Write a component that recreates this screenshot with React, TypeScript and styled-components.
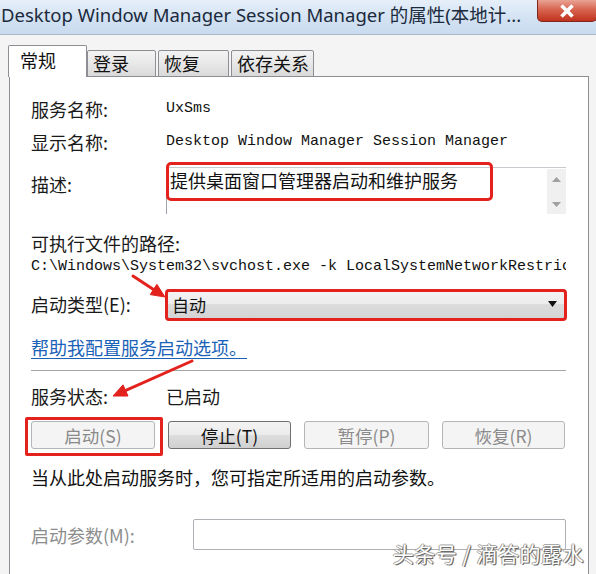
import { createGlobalStyle, styled } from "styled-components";

const GlobalStyle = createGlobalStyle`
  html, body {
    margin: 0;
    padding: 0;
    background: #f5f5f5;
  }
  body {
    font-family: "Noto Sans CJK SC", "Noto Sans", sans-serif;
  }
`;

const CJK = `"Noto Sans CJK SC", "Noto Sans", sans-serif`;
const MONO = `"Liberation Mono", "Noto Sans CJK SC", monospace`;

const Window = styled.div`
  position: relative;
  width: 596px;
  height: 574px;
  overflow: hidden;
  background: #f4f4f4;
  display: flex;
  flex-direction: column;
`;

const TitleBar = styled.div`
  height: 35px;
  flex: none;
  display: flex;
  align-items: flex-start;
  justify-content: space-between;
  background: linear-gradient(180deg, #e6eff9 0%, #d3e2f3 55%, #c9dbef 100%);
  border-bottom: 1px solid #a9b8ca;
  box-sizing: border-box;
`;

const Title = styled.div`
  padding: 2px 0 0 1px;
  font-family: "Noto Sans", ${CJK};
  font-size: 18.5px;
  line-height: 26px;
  color: #1b2a3c;
  white-space: nowrap;
`;

const CloseButton = styled.div`
  width: 60px;
  height: 22px;
  margin-right: -1px;
  display: flex;
  align-items: center;
  justify-content: center;
  background: linear-gradient(180deg, #e9a394 0%, #d7654f 45%, #c0321e 100%);
  border: 1px solid #80271b;
  border-top: none;
  border-radius: 0 0 5px 5px;
  box-sizing: border-box;
`;

const Body = styled.div`
  flex: 1;
  display: flex;
  flex-direction: column;
  padding: 10px 7px 0 8px;
`;

const TabStrip = styled.div`
  display: flex;
  align-items: flex-end;
  height: 32px;
  position: relative;
  z-index: 1;
  margin-bottom: -1px;
`;

const Tab = styled.div<{ $active?: boolean; $w: number }>`
  width: ${(p) => p.$w}px;
  height: ${(p) => (p.$active ? 32 : 27)}px;
  margin-right: ${(p) => (p.$active ? 0 : 2)}px;
  box-sizing: border-box;
  border: 1px solid #8c8e94;
  border-bottom: ${(p) => (p.$active ? "none" : "1px solid #8c8e94")};
  border-radius: 2px 2px 0 0;
  background: ${(p) =>
    p.$active ? "#ffffff" : "linear-gradient(180deg, #f3f3f3 0%, #e8e8e8 50%, #d9d9d9 100%)"};
  font-family: ${CJK};
  font-size: 18px;
  line-height: ${(p) => (p.$active ? 28 : 25)}px;
  padding-left: ${(p) => (p.$active ? 11 : 5)}px;
  color: #111;
`;

const Panel = styled.div`
  flex: 1;
  margin-left: 1px;
  width: 580px;
  background: #ffffff;
  border: 1px solid #8c8e94;
  border-bottom: none;
  box-sizing: border-box;
  padding: 20px 22px 0 21px;
  display: flex;
  flex-direction: column;
`;

const Row = styled.div<{ $mt?: number; $h?: number; $top?: boolean }>`
  display: flex;
  align-items: ${(p) => (p.$top ? "flex-start" : "center")};
  margin-top: ${(p) => p.$mt ?? 0}px;
  height: ${(p) => p.$h ?? 24}px;
`;

const Label = styled.div<{ $w?: number; $muted?: boolean; $pt?: number }>`
  width: ${(p) => (p.$w ? `${p.$w}px` : "auto")};
  flex: none;
  font-family: ${CJK};
  font-size: 18px;
  line-height: 24px;
  padding-top: ${(p) => p.$pt ?? 0}px;
  color: ${(p) => (p.$muted ? "#8d8d8d" : "#1a1a1a")};
  white-space: nowrap;
`;

const Mono = styled.div`
  min-width: 0;
  font-family: ${MONO};
  font-size: 15px;
  line-height: 22px;
  color: #111;
  white-space: nowrap;
  overflow: hidden;
  text-overflow: clip;
`;

const DescBox = styled.div`
  position: relative;
  flex: 1;
  height: 47px;
  box-sizing: border-box;
  border-top: 1px solid #c8cacf;
  border-left: 1px solid #9ea2aa;
  display: flex;
`;

const DescText = styled.div`
  flex: 1;
  padding: 0 0 0 3px;
  font-family: ${CJK};
  font-size: 18px;
  line-height: 24px;
  color: #111;
  white-space: nowrap;
`;

const ScrollBar = styled.div`
  width: 19px;
  margin-top: 1px;
  background: #f0f0f0;
  display: flex;
  flex-direction: column;
  justify-content: space-between;
  align-items: center;
  padding: 8px 0 7px;
  box-sizing: border-box;
`;

const Highlight = styled.div<{ $l: number; $t: number; $w: number; $h: number; $r?: number }>`
  position: absolute;
  left: ${(p) => p.$l}px;
  top: ${(p) => p.$t}px;
  width: ${(p) => p.$w}px;
  height: ${(p) => p.$h}px;
  border: 3px solid #e3211d;
  border-radius: ${(p) => p.$r ?? 4}px;
  box-sizing: border-box;
  pointer-events: none;
`;

const Combo = styled.div`
  position: relative;
  flex: 1;
  height: 30px;
  box-sizing: border-box;
  border: 1px solid #8e8f8f;
  border-radius: 3px;
  background: linear-gradient(180deg, #f4f4f4 0%, #ececec 50%, #dcdcdc 52%, #d4d4d4 100%);
  display: flex;
  align-items: center;
  justify-content: space-between;
  padding: 0 8px 0 5px;
  font-family: ${CJK};
  font-size: 17px;
  color: #111;
`;

const Link = styled.a`
  font-family: ${CJK};
  font-size: 18px;
  line-height: 24px;
  color: #1a62b7;
  text-decoration: underline;
  text-underline-offset: 3px;
  white-space: nowrap;
`;

const Separator = styled.div`
  margin-top: 11px;
  height: 1px;
  background: #a6a6a6;
  border-bottom: 1px solid #ffffff;
`;

const ButtonRow = styled.div`
  display: flex;
  gap: 13px;
  margin-top: 13px;
  height: 28px;
  position: relative;
`;

const Button = styled.div<{ $disabled?: boolean; $w: number }>`
  width: ${(p) => p.$w}px;
  height: 28px;
  box-sizing: border-box;
  border: 1px solid ${(p) => (p.$disabled ? "#b3b6b8" : "#707070")};
  border-radius: 3px;
  background: ${(p) =>
    p.$disabled
      ? "#f4f4f4"
      : "linear-gradient(180deg, #f3f3f3 0%, #ebebeb 50%, #dddddd 52%, #d0d0d0 100%)"};
  display: flex;
  align-items: center;
  justify-content: center;
  font-family: ${CJK};
  font-size: 17.5px;
  color: ${(p) => (p.$disabled ? "#8a8a8a" : "#111")};
  white-space: nowrap;
`;

const Hint = styled.div`
  margin-top: 16px;
  font-family: ${CJK};
  font-size: 18px;
  line-height: 24px;
  color: #111;
  white-space: nowrap;
`;

const ParamInput = styled.div`
  flex: 1;
  height: 31px;
  box-sizing: border-box;
  border: 1px solid #adb0b5;
  border-radius: 2px;
  background: #ffffff;
`;

const Overlay = styled.svg`
  position: absolute;
  left: 0;
  top: 0;
  pointer-events: none;
`;

const Watermark = styled.div`
  position: absolute;
  right: 12px;
  bottom: 8px;
  font-family: ${CJK};
  font-size: 21px;
  line-height: 26px;
  color: #ffffff;
  letter-spacing: 0.5px;
  text-shadow: 1px 1px 0 #6a6a6a, -1px 0 0 #9a9a9a, 0 -1px 0 #aaaaaa, 1px 0 1px #555;
  white-space: nowrap;
`;

const Arrow = ({ x1, y1, x2, y2 }: { x1: number; y1: number; x2: number; y2: number }) => {
  const a = Math.atan2(y2 - y1, x2 - x1);
  const len = 15;
  const spread = 0.42;
  const p1 = [x2 - len * Math.cos(a - spread), y2 - len * Math.sin(a - spread)];
  const p2 = [x2 - len * Math.cos(a + spread), y2 - len * Math.sin(a + spread)];
  const bx = x2 - 11 * Math.cos(a);
  const by = y2 - 11 * Math.sin(a);
  return (
    <g fill="#e3211d" stroke="#e3211d">
      <line x1={x1} y1={y1} x2={bx} y2={by} strokeWidth={3} strokeLinecap="round" />
      <polygon points={`${x2},${y2} ${p1[0]},${p1[1]} ${p2[0]},${p2[1]}`} strokeWidth={1} />
    </g>
  );
};

export default function App() {
  return (
    <>
      <GlobalStyle />
      <Window>
        <TitleBar>
          <Title>Desktop Window Manager Session Manager 的属性(本地计...</Title>
          <CloseButton>
            <svg width="18" height="14" viewBox="0 0 18 14">
              <path d="M3.5 1.5 L14.5 12.5 M14.5 1.5 L3.5 12.5" stroke="#ffffff" strokeWidth="3.6" />
            </svg>
          </CloseButton>
        </TitleBar>

        <Body>
          <TabStrip>
            <Tab $active $w={79}>常规</Tab>
            <Tab $w={69}>登录</Tab>
            <Tab $w={71}>恢复</Tab>
            <Tab $w={83}>依存关系</Tab>
          </TabStrip>

          <Panel>
            <Row>
              <Label $w={135}>服务名称:</Label>
              <Mono>UxSms</Mono>
            </Row>
            <Row $mt={9}>
              <Label $w={135}>显示名称:</Label>
              <Mono>Desktop Window Manager Session Manager</Mono>
            </Row>
            <Row $mt={13} $h={47} $top>
              <Label $w={135} $pt={5}>描述:</Label>
              <DescBox>
                <DescText>提供桌面窗口管理器启动和维护服务</DescText>
                <ScrollBar>
                  <svg width="9" height="5" viewBox="0 0 9 5">
                    <path d="M0 5 L4.5 0 L9 5 Z" fill="#a0a0a0" />
                  </svg>
                  <svg width="9" height="5" viewBox="0 0 9 5">
                    <path d="M0 0 L4.5 5 L9 0 Z" fill="#a0a0a0" />
                  </svg>
                </ScrollBar>
              </DescBox>
            </Row>
            <Row $mt={17}>
              <Label>可执行文件的路径:</Label>
            </Row>
            <Row $h={22} $mt={1}>
              <Mono>C:\Windows\System32\svchost.exe -k LocalSystemNetworkRestricted</Mono>
            </Row>
            <Row $mt={11} $h={30}>
              <Label $w={135}>启动类型(E):</Label>
              <Combo>
                <span>自动</span>
                <svg width="9" height="6" viewBox="0 0 9 6">
                  <path d="M0 0 L9 0 L4.5 6 Z" fill="#111" />
                </svg>
              </Combo>
            </Row>
            <Row $mt={16}>
              <Link>帮助我配置服务启动选项。</Link>
            </Row>
            <Separator />
            <Row $mt={12}>
              <Label $w={135}>服务状态:</Label>
              <Label>已启动</Label>
            </Row>
            <ButtonRow>
              <Button $disabled $w={124}>启动(S)</Button>
              <Button $w={123}>停止(T)</Button>
              <Button $disabled $w={125}>暂停(P)</Button>
              <Button $disabled $w={123}>恢复(R)</Button>
            </ButtonRow>
            <Hint>当从此处启动服务时，您可指定所适用的启动参数。</Hint>
            <Row $mt={30} $h={31}>
              <Label $w={162} $muted>启动参数(M):</Label>
              <ParamInput />
            </Row>
          </Panel>
        </Body>

        <Highlight $l={166} $t={162} $w={327} $h={39} $r={5} />
        <Highlight $l={165} $t={289} $w={402} $h={32} $r={4} />
        <Highlight $l={25} $t={417} $w={138} $h={39} $r={2} />

        <Overlay width="596" height="574">
          <Arrow x1={133} y1={276} x2={165} y2={297} />
          <Arrow x1={192} y1={361} x2={113} y2={396} />
        </Overlay>

        <Watermark>头条号 / 滴答的露水</Watermark>
      </Window>
    </>
  );
}
